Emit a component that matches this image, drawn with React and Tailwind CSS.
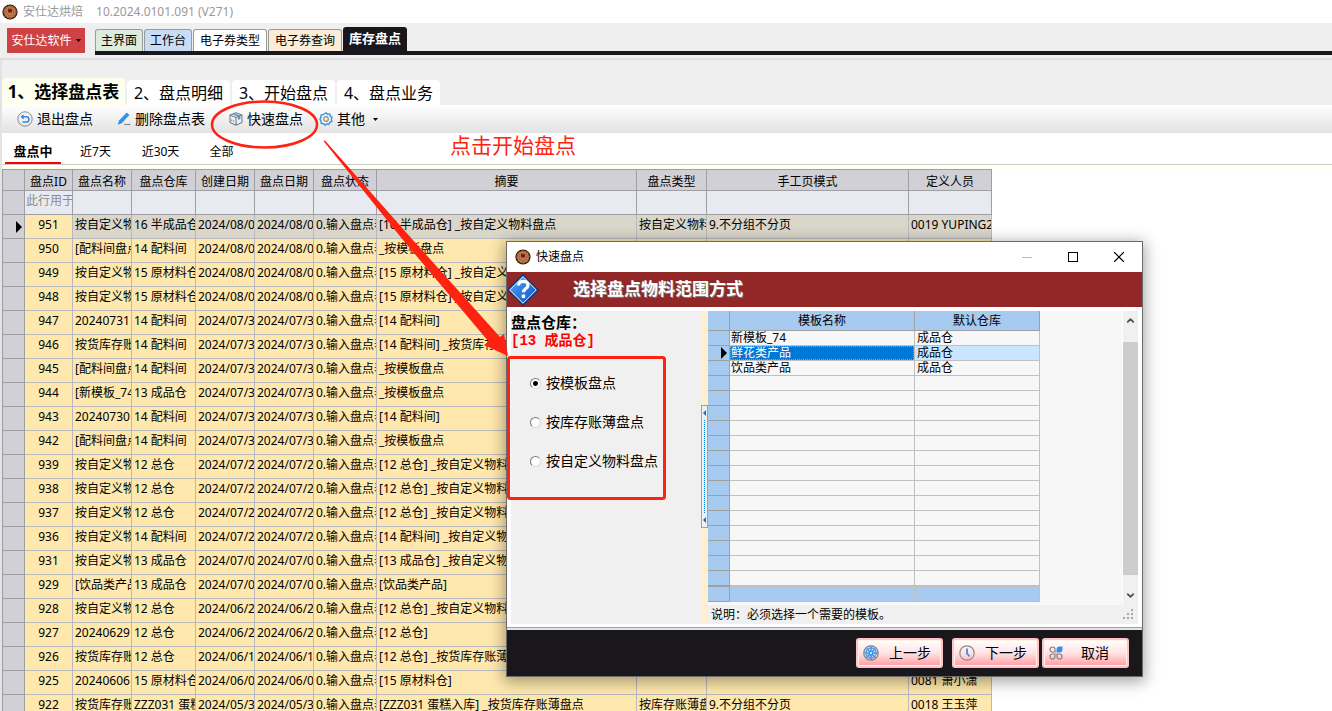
import { useState } from 'react'
import clsx from 'clsx'
import { ChevronDown, ChevronUp, X } from 'lucide-react'

const columns = [
  ['id', '盘点ID', 'w-12'],
  ['name', '盘点名称', 'w-[59px]'],
  ['store', '盘点仓库', 'w-16'],
  ['created', '创建日期', 'w-[59px]'],
  ['counted', '盘点日期', 'w-[59px]'],
  ['status', '盘点状态', 'w-[63px]'],
  ['summary', '摘要', 'w-[260px]'],
  ['type', '盘点类型', 'w-[70px]'],
  ['mode', '手工页模式', 'w-[202px]'],
  ['staff', '定义人员', 'w-[83px]'],
]

const CUSTOM = '按自定义物料盘点'
const LEDGER = '按货库存账薄盘点'
const TEMPLATE = '_按模板盘点'
const MODE = '9.不分组不分页'

const records = [
  ['951', CUSTOM, '16 半成品仓', '2024/08/02', '[16 半成品仓] _按自定义物料盘点', '按自定义物料盘点', MODE, '0019 YUPING2'],
  ['950', '[配料间盘点]', '14 配料间', '2024/08/01', TEMPLATE],
  ['949', CUSTOM, '15 原材料仓', '2024/08/01', '[15 原材料仓] _按自定义物料盘点'],
  ['948', CUSTOM, '15 原材料仓', '2024/08/01', '[15 原材料仓] _按自定义物料盘点'],
  ['947', '20240731', '14 配料间', '2024/07/31', '[14 配料间]'],
  ['946', LEDGER, '14 配料间', '2024/07/31', '[14 配料间] _按货库存账薄盘点'],
  ['945', '[配料间盘点]', '14 配料间', '2024/07/31', TEMPLATE],
  ['944', '[新模板_74]', '13 成品仓', '2024/07/30', TEMPLATE],
  ['943', '20240730', '14 配料间', '2024/07/30', '[14 配料间]'],
  ['942', '[配料间盘点]', '14 配料间', '2024/07/30', TEMPLATE],
  ['939', CUSTOM, '12 总仓', '2024/07/29', '[12 总仓] _按自定义物料盘点'],
  ['938', CUSTOM, '12 总仓', '2024/07/29', '[12 总仓] _按自定义物料盘点'],
  ['937', CUSTOM, '12 总仓', '2024/07/29', '[12 总仓] _按自定义物料盘点'],
  ['936', CUSTOM, '14 配料间', '2024/07/26', '[14 配料间] _按自定义物料盘点'],
  ['931', CUSTOM, '13 成品仓', '2024/07/08', '[13 成品仓] _按自定义物料盘点'],
  ['929', '[饮品类产品]', '13 成品仓', '2024/07/05', '[饮品类产品]'],
  ['928', CUSTOM, '12 总仓', '2024/06/29', '[12 总仓] _按自定义物料盘点'],
  ['927', '20240629', '12 总仓', '2024/06/29', '[12 总仓]'],
  ['926', LEDGER, '12 总仓', '2024/06/17', '[12 总仓] _按货库存账薄盘点'],
  ['925', '20240606', '15 原材料仓', '2024/06/06', '[15 原材料仓]', '', '', '0081 萧小潇'],
  ['922', LEDGER, 'ZZZ031 蛋糕入库', '2024/05/31', '[ZZZ031 蛋糕入库] _按货库存账薄盘点', '按库存账薄盘点', MODE, '0018 王玉萍'],
].map(([id, name, store, date, summary, type, mode, staff]) => ({
  id, name, store, created: date, counted: date, status: '0.输入盘点表', summary, type, mode, staff,
}))

const templates = [
  ['新模板_74', '成品仓'],
  ['鲜花类产品', '成品仓'],
  ['饮品类产品', '成品仓'],
]

function CookieIcon() {
  return (
    <svg width="16" height="16" viewBox="0 0 16 16" className="shrink-0">
      <circle cx="8" cy="8" r="7.6" fill="#2a160c" />
      <circle cx="8" cy="8" r="6.5" fill="#b87a4b" />
      <circle cx="8" cy="8" r="6" fill="none" stroke="#6e3d20" strokeDasharray="1.5 1.6" />
      <circle cx="8" cy="8" r="3.8" fill="none" stroke="#8d5630" strokeDasharray="1 1.2" />
      <rect x="6" y="5" width="4" height="3.5" rx="1" fill="#8b1010" />
    </svg>
  )
}

function BackIcon() {
  return (
    <svg width="16" height="16" viewBox="0 0 16 16" fill="none">
      <circle cx="8" cy="8" r="7.2" stroke="#8a8a8a" />
      <path d="M5 5.8h4.3a2.6 2.6 0 0 1 0 5.2H5.5M6.6 4 4.6 5.8l2 1.9" stroke="#2f8ce4" strokeWidth="1.5" />
    </svg>
  )
}

function PencilIcon() {
  return (
    <svg width="14" height="14" viewBox="0 0 14 14">
      <path d="M9.8.6 12.4 3 4.8 11.2.8 12.8 2 8.6z" fill="#3391ea" />
      <path d="M7 12.500h6.5" stroke="#8a8a8a" strokeWidth="1.2" />
    </svg>
  )
}

function BoxIcon() {
  return (
    <svg width="14" height="14" viewBox="0 0 14 14" fill="none" strokeLinejoin="round">
      <path d="m3.500 2.300 5.500 2.500v3.200l2.500-1V3.800L6 1.400z" fill="#4aa3ee" />
      <path d="M7 .8 13 3v7.500l-6 2.700-6-2.700V3zM1 3l6 2.600L13 3M7 5.600v7.600" stroke="#808080" strokeWidth="1.100" />
      <path d="M2.700 7.500v1.500M4.600 8.300v1.500" stroke="#858585" />
    </svg>
  )
}

function GearIcon() {
  return (
    <svg width="14" height="14" viewBox="0 0 14 14" fill="none">
      <path d="M7 .8 8.600 2.300l2.200-.4.5 2.200 1.900 1.200L12.300 7.300l.6 2.100-2.100.9-.9 2-2.200-.4L6 13.200l-1.600-1.500-2.200-.3-.1-2.300L.9 7.200 2 5.400l-.1-2.200 2.200-.5z" stroke="#2f8ce4" strokeWidth="1.300" strokeLinejoin="round" />
      <circle cx="7" cy="7" r="2.300" stroke="#8a8a8a" strokeWidth="1.200" />
    </svg>
  )
}

function WheelIcon() {
  return (
    <svg width="16" height="16" viewBox="0 0 16 16" fill="none">
      <circle cx="8" cy="8" r="7.200" stroke="#7c7c82" strokeWidth="1.200" />
      <path d="M8 1.500v13M1.500 8h13M3.500 3.500l9 9M12.500 3.500l-9 9" stroke="#3391ea" strokeWidth="1.600" />
      <circle cx="8" cy="8" r="5" stroke="#3fa0f2" strokeWidth="1.500" strokeDasharray="2.600 1.320" />
      <circle cx="8" cy="8" r="1" fill="#fff" />
    </svg>
  )
}

function ClockIcon() {
  return (
    <svg width="16" height="16" viewBox="0 0 16 16" fill="none">
      <circle cx="8" cy="8" r="7.200" stroke="#8a8a8a" strokeWidth="1.200" />
      <path d="M8 3.500V8.500l2.600 3" stroke="#3391ea" strokeWidth="1.800" />
    </svg>
  )
}

function CloverIcon() {
  return (
    <svg width="14" height="14" viewBox="0 0 14 14" fill="none">
      <path d="M6 6H3.500A2.500 2.500 0 1 1 6 3.500zM6 8v2.500A2.500 2.500 0 1 1 3.500 8zM8 8h2.500A2.500 2.500 0 1 1 8 10.500z" stroke="#85807f" strokeWidth="1.200" />
      <path d="M7.500 6.500V3.500a3 3 0 0 1 3-3h3v3a3 3 0 0 1-3 3z" fill="#3391ea" />
    </svg>
  )
}

function QuestionIcon() {
  return (
    <svg width="32" height="32" viewBox="0 0 32 32" className="shrink-0">
      <defs>
        <linearGradient id="diamond" x1="0" y1="0" x2="1" y2="1">
          <stop offset="0" stopColor="#6fb4f7" />
          <stop offset="0.500" stopColor="#2a7be4" />
          <stop offset="1" stopColor="#1350bb" />
        </linearGradient>
      </defs>
      <path d="M16 .8 31.200 16 16 31.200.8 16z" fill="url(#diamond)" stroke="#15336e" strokeWidth="1.200" />
      <path d="M16 2.800 29.200 16 16 29.200 2.800 16z" fill="none" stroke="#d7e9fb" />
      <path d="M11.500 11.500c0-5.500 9.500-5.200 9.500-.3 0 3.300-4.500 3.300-4.500 7" fill="none" stroke="#fff" strokeWidth="3.200" />
      <rect x="14.700" y="20.500" width="3.500" height="3.500" fill="#fff" />
    </svg>
  )
}

function Triangle({ className }) {
  return <svg viewBox="0 0 6 12" className={className}><path d="M0 0l6 6-6 6z" fill="currentColor" /></svg>
}

function Caret() {
  return <svg width="5" height="3" viewBox="0 0 5 3"><path d="M0 0h5L2.500 3z" fill="currentColor" /></svg>
}

const mainTabs = [
  ['主界面', 'w-12 bg-[#dcebdc]'],
  ['工作台', 'w-12 bg-[#c8dcf5]'],
  ['电子券类型', 'w-[74px] bg-white'],
  ['电子券查询', 'w-[74px] bg-[#faecd7]'],
]

function Header() {
  return (
    <>
      <header className="flex h-[23px] items-center gap-[5px] bg-white pl-0.5 text-[#999]">
        <CookieIcon />
        <span>安仕达烘焙</span>
        <span className="ml-2">10.2024.0101.091 (V271)</span>
      </header>
      <div className="flex h-[37px] gap-2.5 border-b-2 border-[#e0e0e0] pl-[7px]">
        <button className="mt-[5px] flex h-[25px] w-[78px] shrink-0 items-center justify-center gap-1 bg-[#cf4244] text-white">
          安仕达软件 <span className="text-black"><Caret /></span>
        </button>
        <nav className="mt-1 flex h-7 grow items-end border-b-4 border-[#19171c]">
          {mainTabs.map(([label, style]) => (
            <button key={label} className={clsx('mr-px h-[22px] whitespace-nowrap rounded-t-[3px] border border-b-0 border-[#9a9a9a]', style)}>
              {label}
            </button>
          ))}
          <button className="h-6 w-16 rounded-t-[3px] bg-[#19171c] text-[13px] font-bold text-white">库存盘点</button>
        </nav>
      </div>
    </>
  )
}

function Steps() {
  return (
    <nav className="flex h-[45px] items-end gap-0.5 text-base">
      <button className="h-[27px] w-[123px] rounded-t bg-[#fffff0] text-[17px] font-bold">1、选择盘点表</button>
      {['2、盘点明细', '3、开始盘点', '4、盘点业务'].map(s => (
        <button key={s} className="h-[25px] w-[103px] rounded-t bg-white">{s}</button>
      ))}
    </nav>
  )
}

function Toolbar() {
  return (
    <div className="flex h-7 items-center bg-linear-to-b from-white to-[#e2e2e2] pl-[15px] text-sm">
      <button className="mr-6 flex items-center gap-1"><BackIcon />退出盘点</button>
      <button className="mr-6 flex items-center gap-1"><PencilIcon />删除盘点表</button>
      <button className="mr-4 flex items-center gap-1"><BoxIcon />快速盘点</button>
      <button className="flex items-center gap-1"><GearIcon />其他 <span className="ml-1"><Caret /></span></button>
    </div>
  )
}

function Filters({ value, onChange }) {
  return (
    <nav className="flex h-8 items-stretch border-b border-[#ccc] bg-white pl-[3px]">
      {[['盘点中', 'w-14'], ['近7天', 'w-[69px]'], ['近30天', 'w-[61px]'], ['全部', 'w-[61px]']].map(([label, width]) => (
        <button key={label} onClick={() => onChange(label)}
          className={clsx('h-[31px] border-b-2 pt-2', width, value === label ? 'border-[#f00] text-[13px] font-bold' : 'border-transparent')}>
          {label}
        </button>
      ))}
    </nav>
  )
}

function RecordTable() {
  return (
    <div className="border-t-4 border-[#fffff0] bg-white">
      <table className="w-[990px] table-fixed border-separate border-spacing-0 border-l border-t border-[#9f9fa3]">
        <thead>
          <tr className="h-[21px] bg-[#d0d0d6]">
            <th className="w-[22px] border-b border-r border-[#9f9fa3]" />
            {columns.map(([key, label, width]) => (
              <th key={key} className={clsx('border-b border-r border-[#9f9fa3] p-0 pt-1 align-top font-normal leading-4', width)}>{label}</th>
            ))}
          </tr>
          <tr className="h-6 bg-[#e7eaf0]">
            <td className="border-b border-r border-[#9f9fa3] bg-[#d0d0d6]" />
            {columns.map(([key]) => (
              <td key={key} className="overflow-hidden whitespace-nowrap border-b border-r border-[#9f9fa3] p-0 pl-px align-top leading-5 text-[#8c8c8c]">
                {key === 'id' && '此行用于筛选'}
              </td>
            ))}
          </tr>
        </thead>
        <tbody>
          {records.map((r, i) => (
            <tr key={r.id} className={clsx('h-6', i === 0 ? 'bg-[#dad6ca]' : 'bg-[#ffe8ad]')}>
              <td className="border-b border-r border-[#9f9fa3] bg-[#d0d0d6] p-0">
                {i === 0 && <Triangle className="ml-auto mr-0.5 h-3 w-1.5" />}
              </td>
              {columns.map(([key]) => (
                <td key={key} className={clsx('overflow-hidden whitespace-nowrap border-b border-r border-[#b9b9bd] p-0 align-top leading-5',
                  key === 'id' ? 'bg-[#ffe8ad] text-center' : 'pl-0.5')}>
                  {r[key]}
                </td>
              ))}
            </tr>
          ))}
        </tbody>
      </table>
    </div>
  )
}

function TemplateTable() {
  const rows = [...templates, ...Array(14).fill(['', ''])]
  return (
    <table className="w-[332px] table-fixed border-separate border-spacing-0 self-start">
      <thead>
        <tr className="h-5 bg-[#a6caf0]">
          <th className="w-[22px] border-b border-r border-[#a0a0a0]" />
          <th className="w-[185px] border-b border-r border-[#a0a0a0] p-0 font-normal leading-[19px]">模板名称</th>
          <th className="border-b border-r border-[#a0a0a0] p-0 font-normal leading-[19px]">默认仓库</th>
        </tr>
      </thead>
      <tbody>
        {rows.map(([name, store], i) => (
          <tr key={i} className="h-[15px] leading-[14px]">
            <td className="border-b border-r border-[#a0a0a0] bg-[#a6caf0] p-0">
              {i === 1 && <Triangle className="ml-auto mr-0.5 h-3 w-1.5" />}
            </td>
            <td className="border-b border-r border-[#c0c0c0] p-0">
              <div className={clsx('h-[14px] pl-px', i === 1 && 'bg-[#0078d7] text-white outline-1 -outline-offset-1 outline-dotted outline-[#e08a3c]')}>{name}</div>
            </td>
            <td className={clsx('border-b border-r border-[#c0c0c0] p-0 pl-0.5', i === 1 && 'bg-[#c8e6ff]')}>{store}</td>
          </tr>
        ))}
      </tbody>
      <tfoot>
        <tr className="h-4 bg-[#a6caf0]">
          <td className="border-b border-r border-t border-[#a0a0a0]" />
          <td className="border-b border-r border-t border-[#c0c0c0]" />
          <td className="border-b border-r border-t border-[#c0c0c0]" />
        </tr>
      </tfoot>
    </table>
  )
}

function DialogButton({ icon, children }) {
  return (
    <button className="flex h-[30px] w-[87px] items-center rounded-[3px] border-2 border-[#ffc4c8] bg-linear-to-b from-white via-[#ffe3e5] to-[#fb9ca5] pl-[5px] text-sm ring-1 ring-inset ring-[#fff3e6]">
      {icon}
      <span className="grow text-center">{children}</span>
    </button>
  )
}

function QuickCountDialog() {
  const [scope, setScope] = useState('按模板盘点')
  return (
    <section role="dialog" aria-label="快速盘点"
      className="absolute left-[506px] top-[241px] w-[637px] border border-[#6a6a6a] bg-white shadow-[0_3px_14px_2px_rgba(0,0,0,0.35)]">
      <header className="flex h-[30px] items-center pl-2">
        <CookieIcon />
        <span className="ml-[5px] grow">快速盘点</span>
        <button aria-label="最小化" className="flex h-full w-[46px] items-center justify-center"><span className="h-px w-2.5 bg-[#bbb]" /></button>
        <button aria-label="最大化" className="flex h-full w-[46px] items-center justify-center"><span className="size-2.5 border border-black" /></button>
        <button aria-label="关闭" className="flex h-full w-[46px] items-center justify-center"><X size={18} strokeWidth={1.5} /></button>
      </header>
      <div className="flex h-[35px] items-center gap-[34px] bg-[#922727] text-[17px] font-bold text-white">
        <QuestionIcon />
        <h1 className="[text-shadow:1px_1px_0_#808080]">选择盘点物料范围方式</h1>
      </div>

      <div className="flex border-b border-[#a0a0a0] p-1 pb-[3px]">
        <div className="w-[190px] bg-[#f0f0f0]">
          <div className="text-[15px] font-bold leading-[22px]">盘点仓库：</div>
          <div className="font-['Liberation_Mono','Noto_Sans_CJK_SC',monospace] text-sm font-bold leading-4 text-[#f00]">[13 成品仓]</div>
          <fieldset className="flex flex-col gap-[19px] pl-[19px] pt-6 text-sm">
            {['按模板盘点', '按库存账薄盘点', '按自定义物料盘点'].map(s => (
              <label key={s} className="flex items-center gap-[5px] whitespace-nowrap">
                <input type="radio" name="scope" checked={scope === s} onChange={() => setScope(s)}
                  className="size-[11px] shrink-0 appearance-none rounded-full border border-[#d8d8d8] border-l-[#777] border-t-[#777] bg-white checked:bg-[radial-gradient(circle,#000_2px,#fff_3px)]" />
                {s}
              </label>
            ))}
          </fieldset>
        </div>
        <div className="flex w-[7px] flex-col bg-[#ffefd0] pb-24 pt-[94px]">
          <div className="flex grow flex-col items-center border border-[#a0a0a0] bg-[#f0f0f0] py-1 text-[#0078d7]">
            <Triangle className="h-1.5 w-[3px] rotate-180" />
            <div className="my-1 grow border-l border-dotted border-[#0078d7]" />
            <Triangle className="h-1.5 w-[3px] rotate-180" />
          </div>
        </div>
        <div className="grow">
          <div className="flex h-[294px] justify-between bg-[#f7f7f7]">
            <TemplateTable />
            <div className="flex w-4 flex-col border-l border-white bg-[#f0f0f0] text-[#505050]">
              <button aria-label="向上滚动" className="flex h-[31px] justify-center pt-1"><ChevronUp size={11} strokeWidth={4} /></button>
              <div className="grow bg-[#cdcdcd]" />
              <button aria-label="向下滚动" className="flex h-[30px] items-end justify-center pb-1"><ChevronDown size={11} strokeWidth={4} /></button>
            </div>
          </div>
          <div className="flex h-[19px] items-center justify-between bg-[#f0f0f0] pl-[3px] pr-1">
            <span>说明：必须选择一个需要的模板。</span>
            <svg width="11" height="11" viewBox="0 0 11 11" fill="#a8a8a8">
              <path d="M8 0h2v2H8zM4 4h2v2H4zM8 4h2v2H8zM0 8h2v2H0zM4 8h2v2H4zM8 8h2v2H8z" />
            </svg>
          </div>
        </div>
      </div>

      <footer className="flex h-12 items-center justify-end border-t-2 border-[#e4e4e4] bg-[#19171c] pr-[13px]">
        <DialogButton icon={<WheelIcon />}>上一步</DialogButton>
        <span className="w-[9px]" />
        <DialogButton icon={<ClockIcon />}>下一步</DialogButton>
        <span className="w-[3px]" />
        <DialogButton icon={<CloverIcon />}>取消</DialogButton>
      </footer>
    </section>
  )
}

// red marks drawn over the windows
function Annotations() {
  return (
    <div className="pointer-events-none absolute inset-0 text-[#ff2211]">
      <svg width="700" height="520" viewBox="0 0 700 520" className="absolute left-0 top-0">
        <ellipse cx="264.500" cy="124.500" rx="52.500" ry="23" fill="none" stroke="currentColor" strokeWidth="2.500" />
        <path d="M323.500 141 325 140.500 412 239 500 337 504 334 508 356 484 345 489 342 403 240z" fill="currentColor" />
        <rect x="508.500" y="357.500" width="156" height="141" rx="2" fill="none" stroke="currentColor" strokeWidth="3" />
      </svg>
      <span className="absolute left-[450px] top-[131px] text-[21px] leading-7">点击开始盘点</span>
    </div>
  )
}

export default function App() {
  const [filter, setFilter] = useState('盘点中')
  return (
    <div className="relative h-screen overflow-hidden bg-[#efefef] font-['Noto_Sans','Noto_Sans_CJK_SC',sans-serif] text-xs text-black">
      <Header />
      <main className="border-l-2 border-[#e3e3e3]">
        <Steps />
        <Toolbar />
        <Filters value={filter} onChange={setFilter} />
        <RecordTable />
      </main>
      <QuickCountDialog />
      <Annotations />
    </div>
  )
}
